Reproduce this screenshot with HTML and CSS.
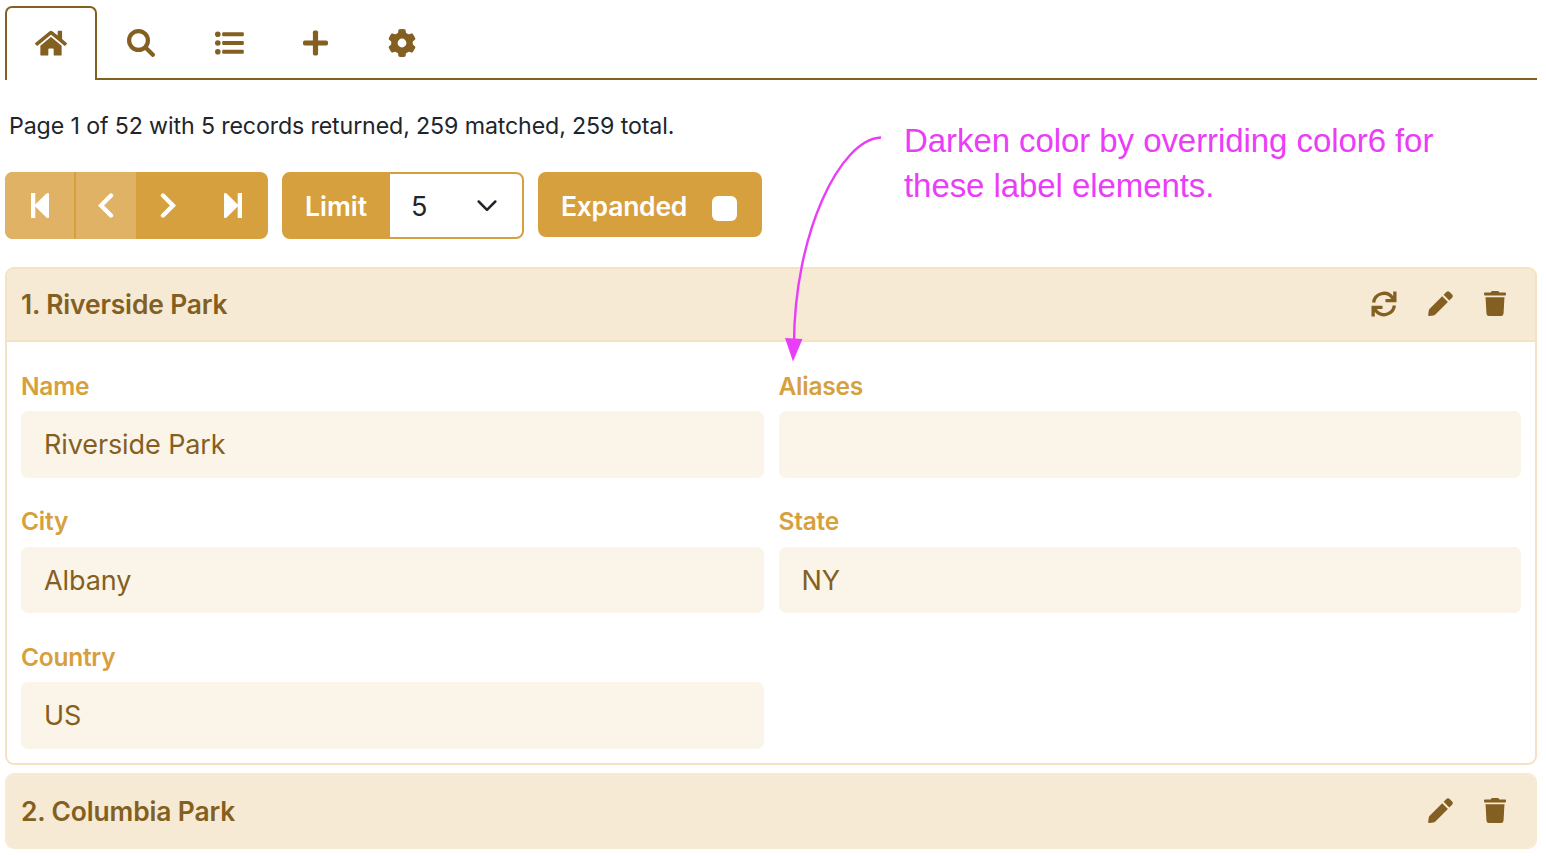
FILE: index.html
```html
<!DOCTYPE html>
<html lang="en">
<head>
<meta charset="utf-8">
<title>Parks</title>
<link rel="stylesheet" href="styles.css">
</head>
<body>
<svg class="defs" width="0" height="0" aria-hidden="true">
  <symbol id="pencil" viewBox="0 0 25 25"><path d="M14.2 5.2 19.9 10.9 7.4 23.4Q6.7 24.1 5.6 24.4L1.3 25Q0 25.1.2 23.7L.8 19.5Q.9 18.5 1.7 17.7Z"/><path d="M15.6 3.8 18.4 1Q20 -.4 21.6 1L24.1 3.5Q25.5 5.1 24.1 6.7L21.3 9.5Z"/></symbol>
  <symbol id="trash" viewBox="0 0 22 25"><path d="M1 1.5H6.6L7.3.5Q7.6 0 8.2 0H13.8Q14.4 0 14.7.5L15.4 1.5H21Q22 1.5 22 2.5V3.6Q22 4.6 21 4.6H1Q0 4.6 0 3.6V2.5Q0 1.5 1 1.5Z"/><path d="M1.5 6.2H20.5L19.5 22.8Q19.3 25 17.1 25H4.9Q2.7 25 2.5 22.8Z"/></symbol>
</svg>

<nav class="tabs">
  <a class="tab tab-active"><svg width="32" height="28.4" viewBox="0 0 576 512"><path d="M280.37 148.26L96 300.11V464a16 16 0 0 0 16 16l112.06-.29a16 16 0 0 0 15.92-16V368a16 16 0 0 1 16-16h64a16 16 0 0 1 16 16v95.64a16 16 0 0 0 16 16.05L464 480a16 16 0 0 0 16-16V300L295.67 148.26a12.19 12.19 0 0 0-15.3 0zM571.6 251.47L488 182.56V44.05a12 12 0 0 0-12-12h-56a12 12 0 0 0-12 12v72.61L318.47 43a48 48 0 0 0-61 0L4.34 251.47a12 12 0 0 0-1.6 16.9l25.5 31A12 12 0 0 0 45.15 301l235.22-193.74a12.19 12.19 0 0 1 15.3 0L530.9 301a12 12 0 0 0 16.9-1.6l25.5-31a12 12 0 0 0-1.7-16.93z"/></svg></a>
  <a class="tab"><svg width="28" height="28" viewBox="0 0 28 28"><circle class="line" cx="11.5" cy="11.5" r="9.4" stroke-width="4.2"/><path class="line" d="M18.5 18.5 25.8 25.8" stroke-width="4.2" stroke-linecap="round"/></svg></a>
  <a class="tab"><svg width="29" height="24" viewBox="0 0 29 24"><circle cx="2.8" cy="3.2" r="2.8"/><circle cx="2.8" cy="12" r="2.8"/><circle cx="2.8" cy="20.8" r="2.8"/><rect x="7.2" y="1.2" width="21.6" height="4" rx="1"/><rect x="7.2" y="10" width="21.6" height="4" rx="1"/><rect x="7.2" y="18.8" width="21.6" height="4" rx="1"/></svg></a>
  <a class="tab tab-plus"><svg width="25" height="26" viewBox="0 0 25 26"><rect x="0" y="10.6" width="25" height="4.8" rx="1.7"/><rect x="9.9" y=".5" width="5.2" height="25" rx="1.7"/></svg></a>
  <a class="tab"><svg width="28" height="28" viewBox="-14 -14 28 28"><circle class="line" r="7.6" stroke-width="6.4"/><g id="teeth"><path id="tooth" d="M-4.200 -9.500-3.500 -13.100Q-3.400 -13.700-2.700 -13.800Q0 -14.200 2.700 -13.800Q3.400 -13.700 3.500 -13.100L4.200 -9.500Z"/><use href="#tooth" transform="rotate(60)"/><use href="#tooth" transform="rotate(120)"/><use href="#tooth" transform="rotate(180)"/><use href="#tooth" transform="rotate(240)"/><use href="#tooth" transform="rotate(300)"/></g></svg></a>
</nav>

<p class="summary">Page 1 of 52 with 5 records returned, 259 matched, 259 total.</p>

<div class="toolbar">
  <div class="pager">
    <span class="page-btn first off"><svg width="18" height="25" viewBox="0 0 18 25"><path d="M0 0H4.3V11.5L15.4.6Q18 -1 18 1.5V23.5Q18 26 15.4 24.4L4.3 13.5V25H0Z"/></svg></span>
    <span class="page-btn prev off"><svg width="16" height="25" viewBox="0 0 16 25"><path class="line" d="M13 2.5 3 12.5 13 22.5"/></svg></span>
    <span class="page-btn next"><svg width="16" height="25" viewBox="0 0 16 25"><path class="line" d="M3 2.5 13 12.5 3 22.5"/></svg></span>
    <span class="page-btn last"><svg width="18" height="25" viewBox="0 0 18 25"><path d="M18 0H13.7V11.5L2.6.6Q0 -1 0 1.5V23.5Q0 26 2.6 24.4L13.7 13.5V25H18Z"/></svg></span>
  </div>
  <div class="limit">
    <span class="limit-label">Limit</span>
    <span class="limit-value">5<svg width="20" height="12" viewBox="0 0 20 12"><path class="line" d="M1.7 1.5 10 9.8 18.3 1.5"/></svg></span>
  </div>
  <label class="expanded"><span>Expanded</span><span class="check"></span></label>
</div>

<section class="card">
  <header class="card-head">
    <h2>1. Riverside Park</h2>
    <div class="actions">
      <svg width="26" height="26" viewBox="0 0 26 26"><path class="line" d="M2.6 11.5A10.5 10.5 0 0 1 21.3 6.4M23.4 14.5A10.5 10.5 0 0 1 4.7 19.6" stroke-width="3.3"/><path d="M25.5.5V11.2H14.5V8H19.3L22.2 5.2V.5ZM.5 25.5V14.8H11.5V18H6.7L3.8 20.8V25.5Z"/></svg>
      <svg width="25" height="25"><use href="#pencil"/></svg>
      <svg width="22" height="25"><use href="#trash"/></svg>
    </div>
  </header>
  <div class="fields">
    <div class="field"><span class="name">Name</span><div class="value">Riverside Park</div></div>
    <div class="field"><span class="name">Aliases</span><div class="value"></div></div>
    <div class="field"><span class="name">City</span><div class="value">Albany</div></div>
    <div class="field"><span class="name">State</span><div class="value">NY</div></div>
    <div class="field"><span class="name">Country</span><div class="value">US</div></div>
  </div>
</section>

<section class="card card-closed">
  <header class="card-head">
    <h2>2. Columbia Park</h2>
    <div class="actions">
      <svg width="25" height="25"><use href="#pencil"/></svg>
      <svg width="22" height="25"><use href="#trash"/></svg>
    </div>
  </header>
</section>

<div class="note">Darken color by overriding color6 for<br>these label elements.</div>
<svg class="arrow" width="110" height="236" viewBox="0 0 110 236"><path class="line" d="M101 7.5C60 9 14 104 14 215"/><path d="M5 208 22.5 209 13 231.500Z"/></svg>
</body>
</html>
```
FILE: styles.css
```css
* { box-sizing: border-box; }
body {
  position: relative;
  margin: 0;
  height: 856px;
  padding: 6px 9px 0 5px;
  overflow: hidden;
  background: #fff;
  color: #212529;
  font-family: Inter, "Liberation Sans", sans-serif;
}
svg { display: block; fill: currentColor; flex: none; }
.line { fill: none; stroke: currentColor; }
.defs { position: absolute; }

.tabs {
  display: flex;
  height: 74px;
  color: #845f22;
  box-shadow: inset 0 -2px #845f22;
}
.tab {
  display: flex;
  align-items: center;
  padding: 0 30px;
}
.tab-active {
  padding: 0 28px 2px;
  background: #fff;
  border: 2px solid #845f22;
  border-bottom: 0;
  border-radius: 7px 7px 0 0;
}
.tab-plus { padding: 0 30px 0 29px; }

.summary {
  margin: 29px 0 0 4px;
  font-size: 23.2px;
  letter-spacing: -0.13px;
  line-height: 34px;
  white-space: nowrap;
}

.toolbar {
  display: flex;
  align-items: flex-start;
  gap: 14px;
  margin-top: 29px;
  color: #fff;
  font-size: 26.5px;
  font-weight: 600;
}
.pager {
  display: flex;
  width: 263px;
  height: 67px;
  border-radius: 8px;
  background: #d7a03e;
  overflow: hidden;
}
.page-btn { display: flex; align-items: center; justify-content: center; }
.page-btn .line { stroke-width: 4.4; stroke-linecap: round; }
.off { background: #e0b265; }
.first { width: 69px; }
.prev { width: 60px; margin-left: 2px; }
.next { width: 63px; }
.last { width: 67px; }

.limit {
  display: flex;
  width: 242px;
  height: 67px;
  border: 2px solid #d7a03e;
  border-radius: 8px;
  background: #d7a03e;
}
.limit-label { width: 106px; padding-left: 21px; line-height: 65px; }
.limit-value {
  display: flex;
  flex: 1;
  align-items: center;
  justify-content: space-between;
  padding: 1px 25px 0 21px;
  border-radius: 0 6px 6px 0;
  background: #fff;
  color: #212529;
  font-size: 27px;
  font-weight: 400;
}
.limit-value .line { stroke-width: 2.5; stroke-linecap: round; stroke-linejoin: round; }

.expanded {
  display: flex;
  align-items: center;
  justify-content: space-between;
  width: 224px;
  height: 65px;
  padding: 2px 25px 0 23px;
  border-radius: 8px;
  background: #d7a03e;
  letter-spacing: -0.25px;
}
.check { width: 25px; height: 25px; margin-top: 5px; border-radius: 6px; background: #fff; }

.card {
  height: 498px;
  margin-top: 28px;
  border: 2px solid #f4e2c2;
  border-radius: 9px;
  color: #845f22;
  overflow: hidden;
}
.card-head {
  display: flex;
  align-items: center;
  justify-content: space-between;
  height: 73px;
  padding: 0 29px 2px 14px;
  background: #f6ead5;
  border-bottom: 2px solid #f4e2c2;
}
.card-head h2 {
  margin: 0;
  font-size: 26.4px;
  font-weight: 600;
  letter-spacing: -0.14px;
}
.actions { display: flex; align-items: center; gap: 31px; }

.fields {
  display: grid;
  grid-template-columns: 1fr 1fr;
  column-gap: 15px;
  row-gap: 25.500px;
  padding: 25.500px 14px 0;
}
.field { height: 110px; }
.name {
  display: block;
  height: 43.500px;
  color: #d7a03e;
  font-size: 24.5px;
  font-weight: 600;
  letter-spacing: -0.25px;
  line-height: 37px;
}
.value {
  height: 66.500px;
  padding-left: 23px;
  border-radius: 7px;
  background: #fbf4e8;
  font-size: 27px;
  letter-spacing: -0.1px;
  line-height: 68px;
}
.card-closed { height: 76px; margin-top: 8px; border-color: #f6ead5; }
.card-closed .card-head { height: 72px; border: 0; padding-bottom: 1px; }

.note {
  position: absolute;
  left: 904px;
  top: 118px;
  color: #ea3df7;
  font-family: "Liberation Sans", Arial, sans-serif;
  font-size: 33px;
  letter-spacing: -0.07px;
  line-height: 45px;
  white-space: nowrap;
}
.arrow { position: absolute; left: 780px; top: 130px; color: #ea3df7; }
.arrow .line { stroke-width: 2.4; }
```
